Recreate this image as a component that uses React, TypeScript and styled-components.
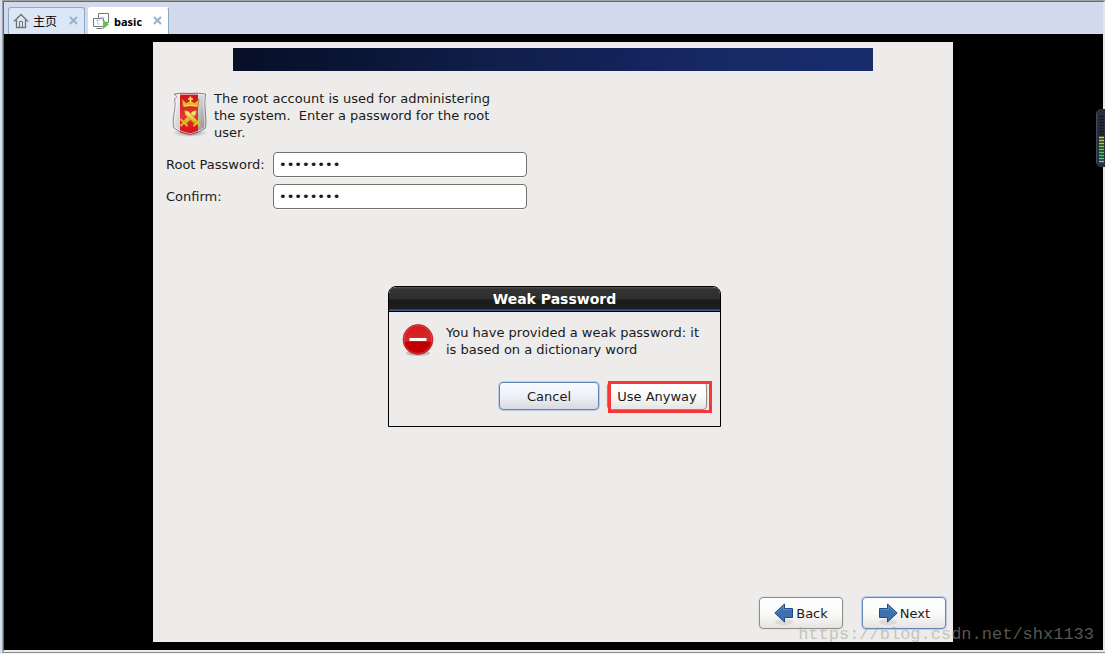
import React from "react";
import styled, { createGlobalStyle } from "styled-components";

const GlobalStyle = createGlobalStyle`
  * { box-sizing: border-box; }
  body { margin: 0; background: #d3daed; }
  button, input { font: inherit; color: inherit; }
`;

const Window = styled.div`
  min-height: 100vh;
  display: flex;
  border-left: 2px solid #d3dff2;
  border-bottom: 1px solid #f4f4f4;
  font-family: "DejaVu Sans", sans-serif;
  font-size: 13px;
  line-height: 17px;
  color: #1a1a1a;
`;

const Frame = styled.div`
  flex: 1;
  display: flex;
  flex-direction: column;
  border-top: 1px solid #a0a0a0;
  border-left: 1px solid #a0a0a0;
  border-bottom: 1px solid #8c8c8c;
`;

const Console = styled.div`
  flex: 1;
  display: flex;
  flex-direction: column;
  border: 1px solid #696969;
  border-right: 2px solid #e8e8e8;
  border-bottom: 2px solid #ececec;
`;

const TabBar = styled.nav`
  display: flex;
  gap: 3px;
  height: 32px;
  padding: 5px 4px 0;
  background: #d3daed;
`;

const Tab = styled.div<{ $active?: boolean }>`
  display: flex;
  align-items: center;
  width: ${(p) => (p.$active ? 81 : 77)}px;
  padding: 0 6px 0 4px;
  border: 1px solid ${(p) => (p.$active ? "#ffffff" : "#86aac8")};
  border-right-color: #86aac8;
  border-bottom: 0;
  border-radius: 3px 3px 0 0;
  background: ${(p) => (p.$active ? "#ffffff" : "#dce7f5")};
`;

const TabLink = styled.a<{ $active?: boolean }>`
  flex: 1;
  display: flex;
  align-items: center;
  gap: 4px;
  color: #000;
  text-decoration: none;
  font: ${(p) => (p.$active ? "bold 11px" : "12px")} "Open Sans", "Noto Sans CJK SC", sans-serif;
`;

const TabClose = styled.button`
  display: flex;
  padding: 0 0 2px;
  border: 0;
  background: none;
`;

const Screen = styled.main`
  position: relative;
  flex: 1;
  display: flex;
  justify-content: center;
  padding: 8px 1px 8px 0;
  background: #000;
`;

const Installer = styled.section`
  position: relative;
  display: flex;
  flex-direction: column;
  width: 100%;
  max-width: 800px;
  padding: 6px 7px 13px 13px;
  background: #edecea;
`;

const Banner = styled.div`
  height: 23px;
  margin: 0 73px 0 67px;
  background: linear-gradient(100deg, #070f26 0%, #0b1536 20%, #101f4b 42%, #13235a 60%, #182a68 80%, #182c6b 100%);
`;

const Intro = styled.div`
  display: flex;
  gap: 5px;
  margin-top: 19px;
  padding-left: 5px;
`;

const IntroText = styled.p`
  width: 290px;
  margin: 0;
  white-space: pre-wrap;
`;

const Form = styled.form`
  display: grid;
  grid-template-columns: 100px 254px;
  gap: 7px;
  align-items: center;
  margin-top: 11px;
`;

const PasswordInput = styled.input`
  height: 25px;
  padding: 0 5px;
  border: 1px solid #73716e;
  border-radius: 4px;
  outline: 0;
  background: #fff;
  box-shadow: 0 1px 0 #f8f8f8;
`;

const Actions = styled.footer`
  display: flex;
  justify-content: flex-end;
  gap: 19px;
  margin-top: auto;
`;

const Button = styled.button<{ $focused?: boolean; $nav?: boolean }>`
  display: flex;
  align-items: center;
  justify-content: center;
  gap: 2px;
  width: ${(p) => (p.$nav ? 84 : 100)}px;
  height: ${(p) => (p.$nav ? 32 : 28)}px;
  padding: 0;
  border: 1px solid ${(p) => (p.$focused ? "#5f86b8" : "#8f8d88")};
  border-radius: 4px;
  background: linear-gradient(#ffffff, #fbfbfa 50%, #e5e4e2);
  box-shadow: 0 0 0 1px ${(p) => (p.$focused ? "#bccce2" : "#e4e3e1")};
`;

const CancelButton = styled(Button)`
  background: linear-gradient(#f7faff, #eff2f8 48%, #d7dbe1);
`;

const Dialog = styled.section`
  position: absolute;
  left: 50%;
  top: 244px;
  width: 333px;
  margin-left: -165px;
  border: 1px solid #000;
  border-radius: 8px 8px 0 0;
  background: #edecea;
`;

const DialogTitle = styled.h1`
  height: 25px;
  margin: 0;
  border-bottom: 1px solid #000;
  border-radius: 7px 7px 0 0;
  background: linear-gradient(#5b5b5b 0, #333 2px, #2e2e2e 12px, #1b1b1b 13px, #1d1d1d 22px, #45608f 23px, #45608f 24px);
  color: #fff;
  font-size: 14px;
  line-height: 24px;
  text-align: center;
`;

const DialogBody = styled.div`
  display: flex;
  gap: 11px;
  padding: 12px 12px 0 12px;
`;

const Message = styled.p`
  flex: 1;
  margin: 0;
`;

const DialogActions = styled.div`
  display: flex;
  justify-content: flex-end;
  gap: 8px;
  padding: 22px 13px 16px;
`;

const Highlighted = styled.div`
  position: relative;
  &::after {
    content: "";
    position: absolute;
    inset: -1px -5px -3px 1px;
    border: 3px solid #f93636;
    pointer-events: none;
  }
`;

const Meter = styled.aside`
  position: absolute;
  right: -2px;
  top: 75px;
  display: flex;
`;

const Watermark = styled.span`
  position: absolute;
  right: 9px;
  bottom: 4px;
  color: rgba(160, 160, 152, 0.55);
  font: 17px/22px "Liberation Mono", monospace;
  pointer-events: none;
`;

const HomeIcon = () => (
  <svg width="16" height="16" viewBox="0 0 16 16" fill="none" stroke="#737373">
    <path d="M1 8.5 8 1.5l7 7M3.5 7v7.5h9V7" strokeWidth="1.3" />
    <path d="M6.5 14V8.5h3V14" />
  </svg>
);

const MachineIcon = () => (
  <svg width="17" height="17" viewBox="0 0 17 17" fill="#fff" stroke="#777">
    <path d="M5.500 .500h10v9h-10z" />
    <path d="M.5 5.500h10v8H.5zM3.500 15.500h6" />
    <path d="M3 7.500h4M4.500 6v5h2M7.500 4.500h4M9.500 3v5h2" fill="none" stroke="#c3cfe6" />
    <path d="M10 6.500v9.500l6-4.500z" fill="#5fc54b" stroke="none" />
  </svg>
);

const CloseIcon = () => (
  <svg width="9" height="9" viewBox="0 0 9 9" stroke="#94b3d0" strokeWidth="2">
    <path d="m1 1 7 7M8 1 1 8" />
  </svg>
);

const ShieldIcon = () => (
  <svg width="38" height="48" viewBox="0 0 38 48">
    <defs>
      <linearGradient id="steel" x2="1" y2="1">
        <stop stopColor="#f4f4f4" />
        <stop offset=".5" stopColor="#d2d2d6" />
        <stop offset="1" stopColor="#85848c" />
      </linearGradient>
      <linearGradient id="crimson" x2="0" y2="1">
        <stop stopColor="#cc121b" />
        <stop offset=".55" stopColor="#ee2f36" />
        <stop offset="1" stopColor="#cb1018" />
      </linearGradient>
      <linearGradient id="gold" x2="0" y2="1">
        <stop stopColor="#fff08a" />
        <stop offset="1" stopColor="#d9a514" />
      </linearGradient>
      <radialGradient id="shieldShade">
        <stop stopColor="#555" stopOpacity=".6" />
        <stop offset="1" stopColor="#555" stopOpacity="0" />
      </radialGradient>
    </defs>
    <ellipse cx="19" cy="43" rx="18" ry="4" fill="url(#shieldShade)" />
    <path
      d="M3 4Q11 2.500 19 3.500 27 2.500 34.500 4 33 13 34.500 24 35.500 34 34.500 38 28 43 19 45 9 43 3 38 1.500 34 3 24 5 14 3.500 9L6.500 7z"
      fill="url(#steel)"
      stroke="#85848b"
    />
    <path d="M9 3.800q9.500-.8 18 0v38.500q-4 1.700-8 2.200-6-1-10-2.500z" fill="url(#crimson)" />
    <path
      d="M7 5q6-1 12-.5Q27 4 33.200 5 32 14 33.300 24q1 9 .2 13.500Q27 42 19 43.800 10 42 4 37.500 3 33 4.200 24 6 15 5 9.500z"
      fill="none"
      stroke="#fff"
      strokeOpacity=".6"
    />
    <path d="M12 17 11 9l4 4 4.500-2 4.500 2 4-4-1 8q-7.500-1.600-15 0z" fill="#f0b429" stroke="#a8690c" strokeWidth=".6" />
    <path d="M19.500 6.500v6M17 9h5" stroke="#ffe36b" strokeWidth="1.600" />
    <path d="M13 16q6.500-1.400 13 0" fill="none" stroke="#ffe36b" />
    <path d="m25.500 20.500-4 .8-9 9.400 3 3 9.300-9z" fill="url(#gold)" stroke="#a87f10" strokeWidth=".7" />
    <path d="m13.500 20.500 4 .8 9 9.400-3 3-9.300-9z" fill="url(#gold)" stroke="#a87f10" strokeWidth=".7" />
    <path d="m10 29.500 6 6M29 29.500l-6 6M13 32.500l-3 3M26 32.500l3 3" stroke="#e5c02a" strokeWidth="1.800" strokeLinecap="round" />
  </svg>
);

const StopIcon = () => (
  <svg width="34" height="36" viewBox="0 0 34 36">
    <defs>
      <linearGradient id="stopRed" x2="0" y2="1">
        <stop stopColor="#d4171c" />
        <stop offset=".55" stopColor="#d62a2a" />
        <stop offset=".6" stopColor="#be0000" />
        <stop offset="1" stopColor="#c50000" />
      </linearGradient>
    </defs>
    <ellipse cx="17" cy="29" rx="12" ry="3" fill="#777" opacity=".4" />
    <circle cx="17" cy="15.500" r="15" fill="url(#stopRed)" stroke="#b40b10" strokeWidth=".6" />
    <circle cx="17" cy="15.500" r="14" fill="none" stroke="#e56868" strokeOpacity=".5" />
    <path d="M8.500 14h17v3h-17z" fill="#fff" />
  </svg>
);

const ArrowIcon = ({ back = false }: { back?: boolean }) => (
  <svg width="20" height="24" viewBox="0 0 20 24">
    <ellipse cx="10" cy="21" rx="9" ry="3" fill="#777" opacity=".15" />
    <path
      d={back ? "M.8 12 10.500 3v4.500h8v9h-8V21z" : "M19.200 12 9.500 3v4.500h-8v9h8V21z"}
      fill="#3d70ae"
      stroke="#204a87"
    />
    <path d={back ? "m2.500 12 7-6.500v3h8" : "m17.500 12-7-6.500v3h-8"} fill="none" stroke="#7ca4d2" strokeOpacity=".6" />
  </svg>
);

const LevelMeter = () => (
  <svg width="10" height="58" viewBox="0 0 10 58">
    <path d="M10 0H4L1 3v52l3 3h6z" fill="#292e3c" />
    <path d="M1.500 4v50" stroke="#43485a" />
    {Array.from({ length: 16 }, (_, i) => (
      <path
        key={i}
        d={`M4 ${7.5 + i * 3}h5`}
        stroke={i < 7 ? "#171a22" : `hsl(${62 + (i - 7) * 12} 62% 56%)`}
        strokeWidth="1.500"
      />
    ))}
  </svg>
);

export default function App() {
  return (
    <Window>
      <GlobalStyle />
      <Frame>
        <Console>
          <TabBar>
            <Tab>
              <TabLink href="#home"><HomeIcon />主页</TabLink>
              <TabClose aria-label="Close home"><CloseIcon /></TabClose>
            </Tab>
            <Tab $active>
              <TabLink href="#basic" $active><MachineIcon />basic</TabLink>
              <TabClose aria-label="Close basic"><CloseIcon /></TabClose>
            </Tab>
          </TabBar>
          <Screen>
            <Installer>
              <Banner />
              <Intro>
                <ShieldIcon />
                <IntroText>{"The root account is used for administering the system.  Enter a password for the root user."}</IntroText>
              </Intro>
              <Form>
                <label htmlFor="root-password">Root Password:</label>
                <PasswordInput id="root-password" type="password" defaultValue="password" />
                <label htmlFor="confirm">Confirm:</label>
                <PasswordInput id="confirm" type="password" defaultValue="password" />
              </Form>
              <Actions>
                <Button type="button" $nav><ArrowIcon back />Back</Button>
                <Button type="button" $nav $focused><ArrowIcon />Next</Button>
              </Actions>
              <Dialog role="dialog" aria-labelledby="dialog-title">
                <DialogTitle id="dialog-title">Weak Password</DialogTitle>
                <DialogBody>
                  <StopIcon />
                  <Message>You have provided a weak password: it is based on a dictionary word</Message>
                </DialogBody>
                <DialogActions>
                  <CancelButton type="button" $focused>Cancel</CancelButton>
                  <Highlighted><Button type="button">Use Anyway</Button></Highlighted>
                </DialogActions>
              </Dialog>
            </Installer>
            <Meter><LevelMeter /></Meter>
            <Watermark>https://blog.csdn.net/shx1133</Watermark>
          </Screen>
        </Console>
      </Frame>
    </Window>
  );
}
